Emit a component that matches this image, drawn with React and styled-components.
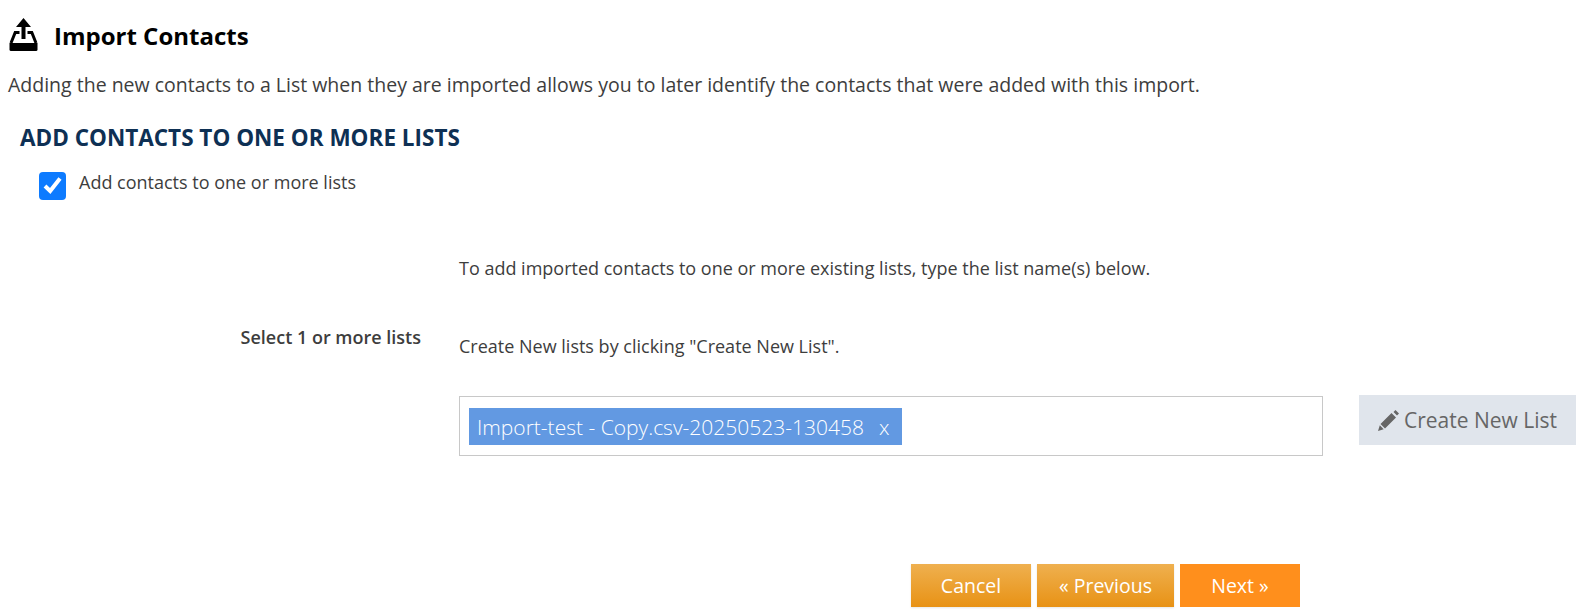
import styled, { createGlobalStyle } from 'styled-components'

const GlobalStyle = createGlobalStyle`
  html, body { margin: 0; padding: 0; background: #fff; }
  body { font-family: "Open Sans", "Noto Sans", sans-serif; color: #3d3d3d; }
`

export default function App () {
  return (
    <Page>
      <GlobalStyle />
      <Heading>
        <svg width="29" height="33" viewBox="0 0 29 33">
          <path d="M14.5 0 L22 9 H16.5 V21 H12.5 V9 H7 Z" fill="#000" />
          <path d="M10.5 14.5 H6.2 L2 25 M18.5 14.5 H22.8 L27 25" fill="none" stroke="#000" strokeWidth="3" />
          <path d="M0.5 25 H28.5 V31.5 Q28.5 33 27 33 H2 Q0.5 33 0.5 31.5 Z" fill="#000" />
        </svg>
        <Title>Import Contacts</Title>
      </Heading>
      <Intro>Adding the new contacts to a List when they are imported allows you to later identify the contacts that were added with this import.</Intro>
      <SectionTitle>ADD CONTACTS TO ONE OR MORE LISTS</SectionTitle>
      <CheckRow>
        <CheckBox>
          <svg width="22" height="22" viewBox="0 0 22 22">
            <path d="M3 11 L8.2 16 L18 3.5" fill="none" stroke="#fff" strokeWidth="4" />
          </svg>
        </CheckBox>
        <CheckLabel>Add contacts to one or more lists</CheckLabel>
      </CheckRow>
      <FormRow>
        <FieldLabel>Select 1 or more lists</FieldLabel>
        <FieldBody>
          <HelpList>
            <Help>To add imported contacts to one or more existing lists, type the list name(s) below.</Help>
            <Help>Create New lists by clicking "Create New List".</Help>
          </HelpList>
          <InputRow>
            <TagInput>
              <Tag>Import-test - Copy.csv-20250523-130458<TagClose>x</TagClose></Tag>
            </TagInput>
            <CreateButton>
              <svg width="21" height="21" viewBox="0 0 21 21">
                <path d="M0 21 L1.8 15.3 L5.7 19.2 Z M2.5 14 L13.5 3 L18 7.5 L7 18.5 Z M15.5 2 L17.5 0 L21 3.5 L19 5.5 Z" fill="#666" />
              </svg>
              Create New List
            </CreateButton>
          </InputRow>
        </FieldBody>
      </FormRow>
      <Actions>
        <ActionButton width="120px">Cancel</ActionButton>
        <ActionButton width="137px">« Previous</ActionButton>
        <ActionButton width="120px" primary>Next »</ActionButton>
      </Actions>
    </Page>
  )
}

const Page = styled.div`
  width: 1579px;
  height: 616px;
  overflow: hidden;
  box-sizing: border-box;
  padding: 18px 0 0 8px;
`
const Heading = styled.div`
  display: flex;
  align-items: center;
  gap: 16px;
  height: 33px;
  padding-left: 1px;
`
const Title = styled.h1`
  margin: 0;
  padding-top: 2px;
  font-size: 24px;
  font-weight: 700;
  color: #000;
`
const Intro = styled.p`
  margin: 20px 0 0;
  font-size: 19.5px;
  line-height: 28px;
`
const SectionTitle = styled.h2`
  margin: 23px 0 0 12px;
  font-size: 22.5px;
  line-height: 32px;
  font-weight: 700;
  color: #0e3054;
`
const CheckRow = styled.div`
  display: flex;
  align-items: flex-start;
  margin: 18px 0 0 31px;
  gap: 13px;
`
const CheckBox = styled.span`
  width: 27px;
  height: 28px;
  border-radius: 4px;
  background: #0d7bff;
  display: flex;
  align-items: center;
  justify-content: center;
`
const CheckLabel = styled.span`
  font-size: 18px;
  line-height: 20px;
`
const FormRow = styled.div`
  display: flex;
  margin-top: 56px;
`
const FieldLabel = styled.div`
  width: 413px;
  padding-top: 69px;
  text-align: right;
  font-size: 18px;
  line-height: 24px;
  font-weight: 600;
`
const FieldBody = styled.div`
  margin-left: 38px;
`
const HelpList = styled.div`
  display: flex;
  flex-direction: column;
  gap: 54px;
  margin-bottom: 38px;
`
const Help = styled.p`
  margin: 0;
  font-size: 18px;
  line-height: 24px;
`
const InputRow = styled.div`
  display: flex;
  align-items: flex-start;
  gap: 36px;
`
const TagInput = styled.div`
  width: 864px;
  height: 60px;
  box-sizing: border-box;
  border: 1px solid #c8c8c8;
  padding: 11px 9px;
`
const Tag = styled.span`
  display: inline-flex;
  align-items: center;
  height: 37px;
  padding: 0 13px 0 8px;
  background: #6299e2;
  color: #fff;
  font-size: 21px;
  font-weight: 300;
`
const TagClose = styled.span`
  margin-left: 15px;
`
const CreateButton = styled.div`
  display: flex;
  align-items: center;
  gap: 5px;
  justify-content: center;
  width: 217px;
  height: 50px;
  margin-top: -1px;
  background: #e0e5ec;
  color: #666;
  font-size: 21px;
`
const Actions = styled.div`
  display: flex;
  gap: 6px;
  margin: 108px 0 0 903px;
`
const ActionButton = styled.div`
  display: flex;
  align-items: center;
  justify-content: center;
  width: ${props => props.width};
  height: 43px;
  color: #fff;
  font-size: 19.5px;
  background: ${props => props.primary ? '#ff8f1c' : 'linear-gradient(#efb04f, #e89215)'};
  box-shadow: ${props => props.primary ? 'none' : '0 1px 2px rgba(0, 0, 0, 0.1)'};
`
